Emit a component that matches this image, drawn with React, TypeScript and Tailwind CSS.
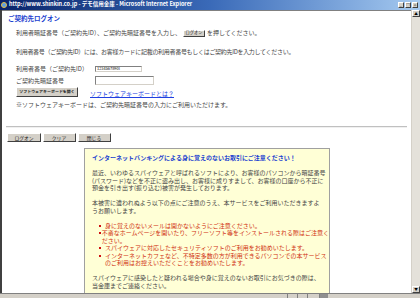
import React from "react";

const jp = { fontFamily: '"Noto Sans CJK JP", "Noto Sans", sans-serif' };

// classic 3D gray button; label is shrunk with a transform because tiny font sizes get clamped
const Btn: React.FC<{ label: string; className?: string; labelClass?: string }> = ({
  label,
  className = "",
  labelClass = "scale-[0.8]",
}) => (
  <span
    className={`inline-flex items-center justify-center whitespace-nowrap bg-[#d4d0c8] border border-t-white border-l-white border-b-[#404040] border-r-[#404040] text-[6px] leading-none text-[#222] ${className}`}
  >
    <span className={`inline-block shrink-0 ${labelClass}`}>{label}</span>
  </span>
);

const TitleButton: React.FC<{ ch: string }> = ({ ch }) => (
  <span className="w-[6px] h-[6px] bg-[#d4d0c8] border-t border-l border-white border-b border-r border-b-[#404040] border-r-[#404040] flex items-center justify-center text-[6px] leading-none text-black">
    <span className="inline-block scale-[0.6]">{ch}</span>
  </span>
);

const bullets: string[][] = [
  ["身に覚えのないメールは開かないようにご注意ください。"],
  ["不審なホームページを開いたり、フリーソフト等をインストールされる際はご注意く", "ださい。"],
  ["スパイウェアに対応したセキュリティソフトのご利用をお勧めいたします。"],
  ["インターネットカフェなど、不特定多数の方が利用できるパソコンでの本サービス", "のご利用はお控えいただくことをお勧めいたします。"],
];

export default function App() {
  return (
    <div className="w-[420px] h-[298px] flex flex-col bg-[#d4d0c8] overflow-hidden" style={jp}>
      {/* window title bar */}
      <div className="h-[10px] flex items-center bg-gradient-to-r from-[#0a246a] via-[#3a6ab8] to-[#a6caf0] px-[1px]">
        <span className="w-[6px] h-[6px] rounded-full bg-[#5aa0e8] border border-[#e8c040] mr-[2px] shrink-0" />
        <span className="text-[5.5px] font-bold text-white whitespace-nowrap leading-none">
          http://www.shinkin.co.jp - デモ信用金庫 - Microsoft Internet Explorer
        </span>
        <div className="ml-auto flex gap-[1px] mr-[1px]">
          <TitleButton ch="_" />
          <TitleButton ch="□" />
          <TitleButton ch="×" />
        </div>
      </div>

      <div className="flex flex-1 min-h-0">
        {/* left frame */}
        <div className="w-[2px] bg-[#404040]" />

        {/* page content */}
        <div className="flex-1 bg-white border-t border-[#808080] overflow-hidden text-[6px] text-[#444] leading-[8px]">
          <div className="pl-[6px] mt-[3px] text-[6.5px] font-bold text-[#1c3fd0]">ご契約先ログオン</div>

          <div className="pl-[14px] mt-[7px] flex items-center whitespace-nowrap">
            <span>利用者暗証番号（ご契約先ID）、ご契約先暗証番号を入力し、</span>
            <Btn label="ログオン" className="w-[22px] h-[7px] mx-[2px]" labelClass="scale-[0.7]" />
            <span>を押してください。</span>
          </div>
          <div className="pl-[14px] mt-[11px] whitespace-nowrap tracking-[-0.3px]">
            利用者番号（ご契約先ID）には、お客様カードに記載の利用者番号もしくはご契約先IDを入力してください。
          </div>

          <div className="pl-[14px] mt-[9px] flex items-center h-[8px]">
            <span className="w-[79px] whitespace-nowrap">利用者番号（ご契約先ID）</span>
            <span className="w-[47px] h-[6px] border border-t-[#808080] border-l-[#808080] border-b-[#d4d0c8] border-r-[#d4d0c8] pl-[1px] flex items-center overflow-hidden">
              <span className="inline-block origin-left scale-[0.65] text-black leading-none">1234567890l</span>
            </span>
          </div>
          <div className="pl-[14px] mt-[3px] flex items-center h-[9px]">
            <span className="w-[79px]">ご契約先暗証番号</span>
            <span className="w-[59px] h-[9px] border border-t-[#808080] border-l-[#808080] border-b-[#d4d0c8] border-r-[#d4d0c8]" />
          </div>

          <div className="pl-[14px] mt-[2px] flex items-end h-[10px]">
            <Btn
              label="ソフトウェアキーボードを開く"
              className="w-[62px] h-[10px] font-bold"
              labelClass="scale-[0.66]"
            />
            <span className="ml-[12px] text-[#2040e0] underline leading-[7px]">ソフトウェアキーボードとは？</span>
          </div>
          <div className="pl-[14px] mt-[4px] whitespace-nowrap">
            ※ソフトウェアキーボードは、ご契約先暗証番号の入力にご利用いただけます。
          </div>

          <div className="ml-[4px] mr-[4px] mt-[17px] border-t border-[#c0c0c0] border-b border-b-[#f0f0f0]" />

          <div className="pl-[5px] mt-[5px] flex gap-[2px]">
            <Btn label="ログオン" className="w-[34px] h-[9px]" />
            <Btn label="クリア" className="w-[33px] h-[9px]" />
            <Btn label="閉じる" className="w-[33px] h-[9px]" />
          </div>

          {/* notice box */}
          <div className="ml-[82px] mt-[6px] w-[246px] bg-[#ffffd6] border border-[#a0a0a0] pt-[5px] pb-[4px] pl-[7px] leading-[7.5px] whitespace-nowrap">
            <div className="font-bold text-[#1c3fd0]">インターネットバンキングによる身に覚えのないお取引にご注意ください！</div>
            <div className="h-[7.5px]" />
            <div>最近、いわゆるスパイウェアと呼ばれるソフトにより、お客様のパソコンから暗証番号</div>
            <div>(パスワード)などを不正に盗み出し、お客様に成りすまして、お客様の口座から不正に</div>
            <div>預金を引き出す(振り込む)被害が発生しております。</div>
            <div className="h-[7.5px]" />
            <div>本被害に遭われぬよう以下の点にご注意のうえ、本サービスをご利用いただきますよ</div>
            <div>うお願いします。</div>
            <div className="h-[7.5px]" />
            <ul className="text-[#d03010] pl-[7px]">
              {bullets.map((lines, i) => (
                <li key={i} className="flex">
                  <span className="w-[6px] flex justify-start pt-[3px]">
                    <span className="w-[2px] h-[2px] bg-[#d01010]" />
                  </span>
                  <span>
                    {lines.map((l, j) => (
                      <div key={j}>{l}</div>
                    ))}
                  </span>
                </li>
              ))}
            </ul>
            <div className="h-[7.5px]" />
            <div>スパイウェアに感染したと疑われる場合や身に覚えのないお取引にお気づきの際は、</div>
            <div>当金庫までご連絡ください。</div>
          </div>
        </div>

        {/* scrollbar */}
        <div className="w-[9px] flex flex-col bg-[#e4e1da] border-l border-[#d4d0c8]">
          <div className="h-[7px] bg-[#d4d0c8] border border-t-white border-l-white border-b-[#404040] border-r-[#404040] flex items-center justify-center text-[6px] leading-none">
            <span className="inline-block scale-[0.6]">▲</span>
          </div>
          <div className="flex-1" />
          <div className="h-[7px] bg-[#d4d0c8] border border-t-white border-l-white border-b-[#404040] border-r-[#404040] flex items-center justify-center text-[6px] leading-none">
            <span className="inline-block scale-[0.6]">▼</span>
          </div>
        </div>
      </div>

      {/* status bar */}
      <div className="h-[5px] bg-[#d4d0c8] border-t border-[#808080] flex">
        <div className="w-[288px] border-r border-[#808080]" />
        <div className="w-[10px] border-r border-[#808080]" />
        <div className="w-[10px] border-r border-[#808080]" />
        <div className="w-[12px] border-r border-[#808080]" />
        <div className="w-[8px] bg-[#909090]" />
      </div>
    </div>
  );
}
